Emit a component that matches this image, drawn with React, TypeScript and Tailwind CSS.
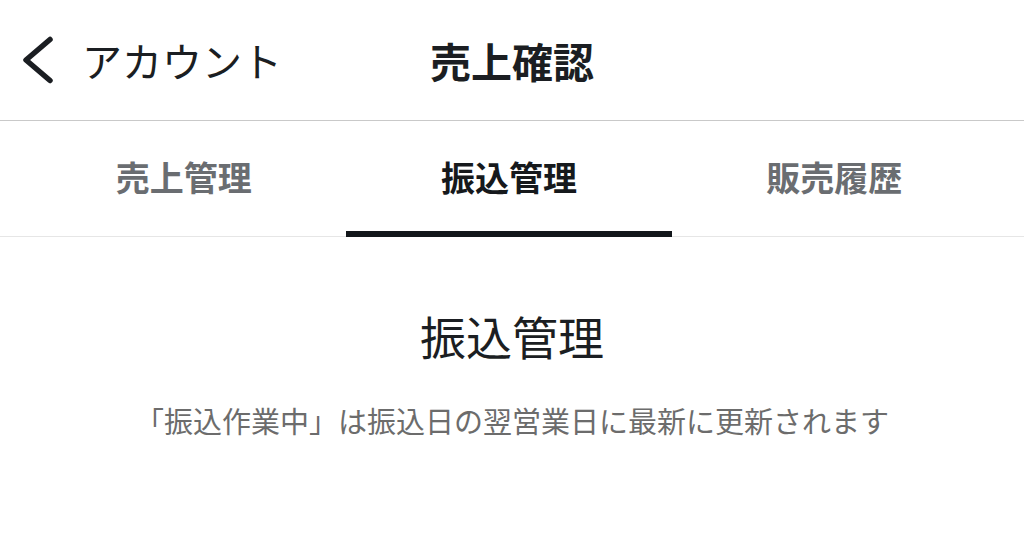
export default function App() {
  const tabs = ['売上管理', '振込管理', '販売履歴']
  const active = 1

  return (
    <div
      className="w-[1024px] h-[538px] bg-white flex flex-col text-[#1b1e22]"
      style={{ fontFamily: '"Noto Sans CJK JP", "Noto Sans", sans-serif' }}
    >
      <header className="relative h-[121px] flex items-center border-b border-[#c9c9c9] shrink-0">
        <div className="flex items-center pl-[20px] gap-[28px]">
          <svg width="34" height="52" viewBox="0 0 34 52" fill="none">
            <polyline
              points="30,5.5 6,26 30,46.5"
              stroke="#1b1e22"
              strokeWidth="5.5"
              strokeLinecap="round"
              strokeLinejoin="round"
            />
          </svg>
          <span className="text-[40px] font-normal leading-none">アカウント</span>
        </div>
        <h1 className="absolute left-1/2 -translate-x-1/2 text-[41px] font-bold leading-none">売上確認</h1>
      </header>

      <nav className="grid grid-cols-3 pl-[21px] pr-[27px] h-[116px] border-b border-[#e6e6e6] shrink-0">
        {tabs.map((t, i) => (
          <div key={t} className="relative flex items-center justify-center pb-[4px]">
            <span
              className={
                'text-[34px] font-bold leading-none ' +
                (i === active ? 'text-[#16191c]' : 'text-[#6a6d71]')
              }
            >
              {t}
            </span>
            {i === active && (
              <div className="absolute bottom-[-1px] left-0 right-0 h-[6px] bg-[#12161a]" />
            )}
          </div>
        ))}
      </nav>

      <main className="flex flex-col items-center pt-[75px]">
        <h2 className="text-[46px] font-normal leading-none">振込管理</h2>
        <p className="mt-[48px] text-[29px] leading-none text-[#6c6c6c]">
          「振込作業中」は振込日の翌営業日に最新に更新されます
        </p>
      </main>
    </div>
  )
}
